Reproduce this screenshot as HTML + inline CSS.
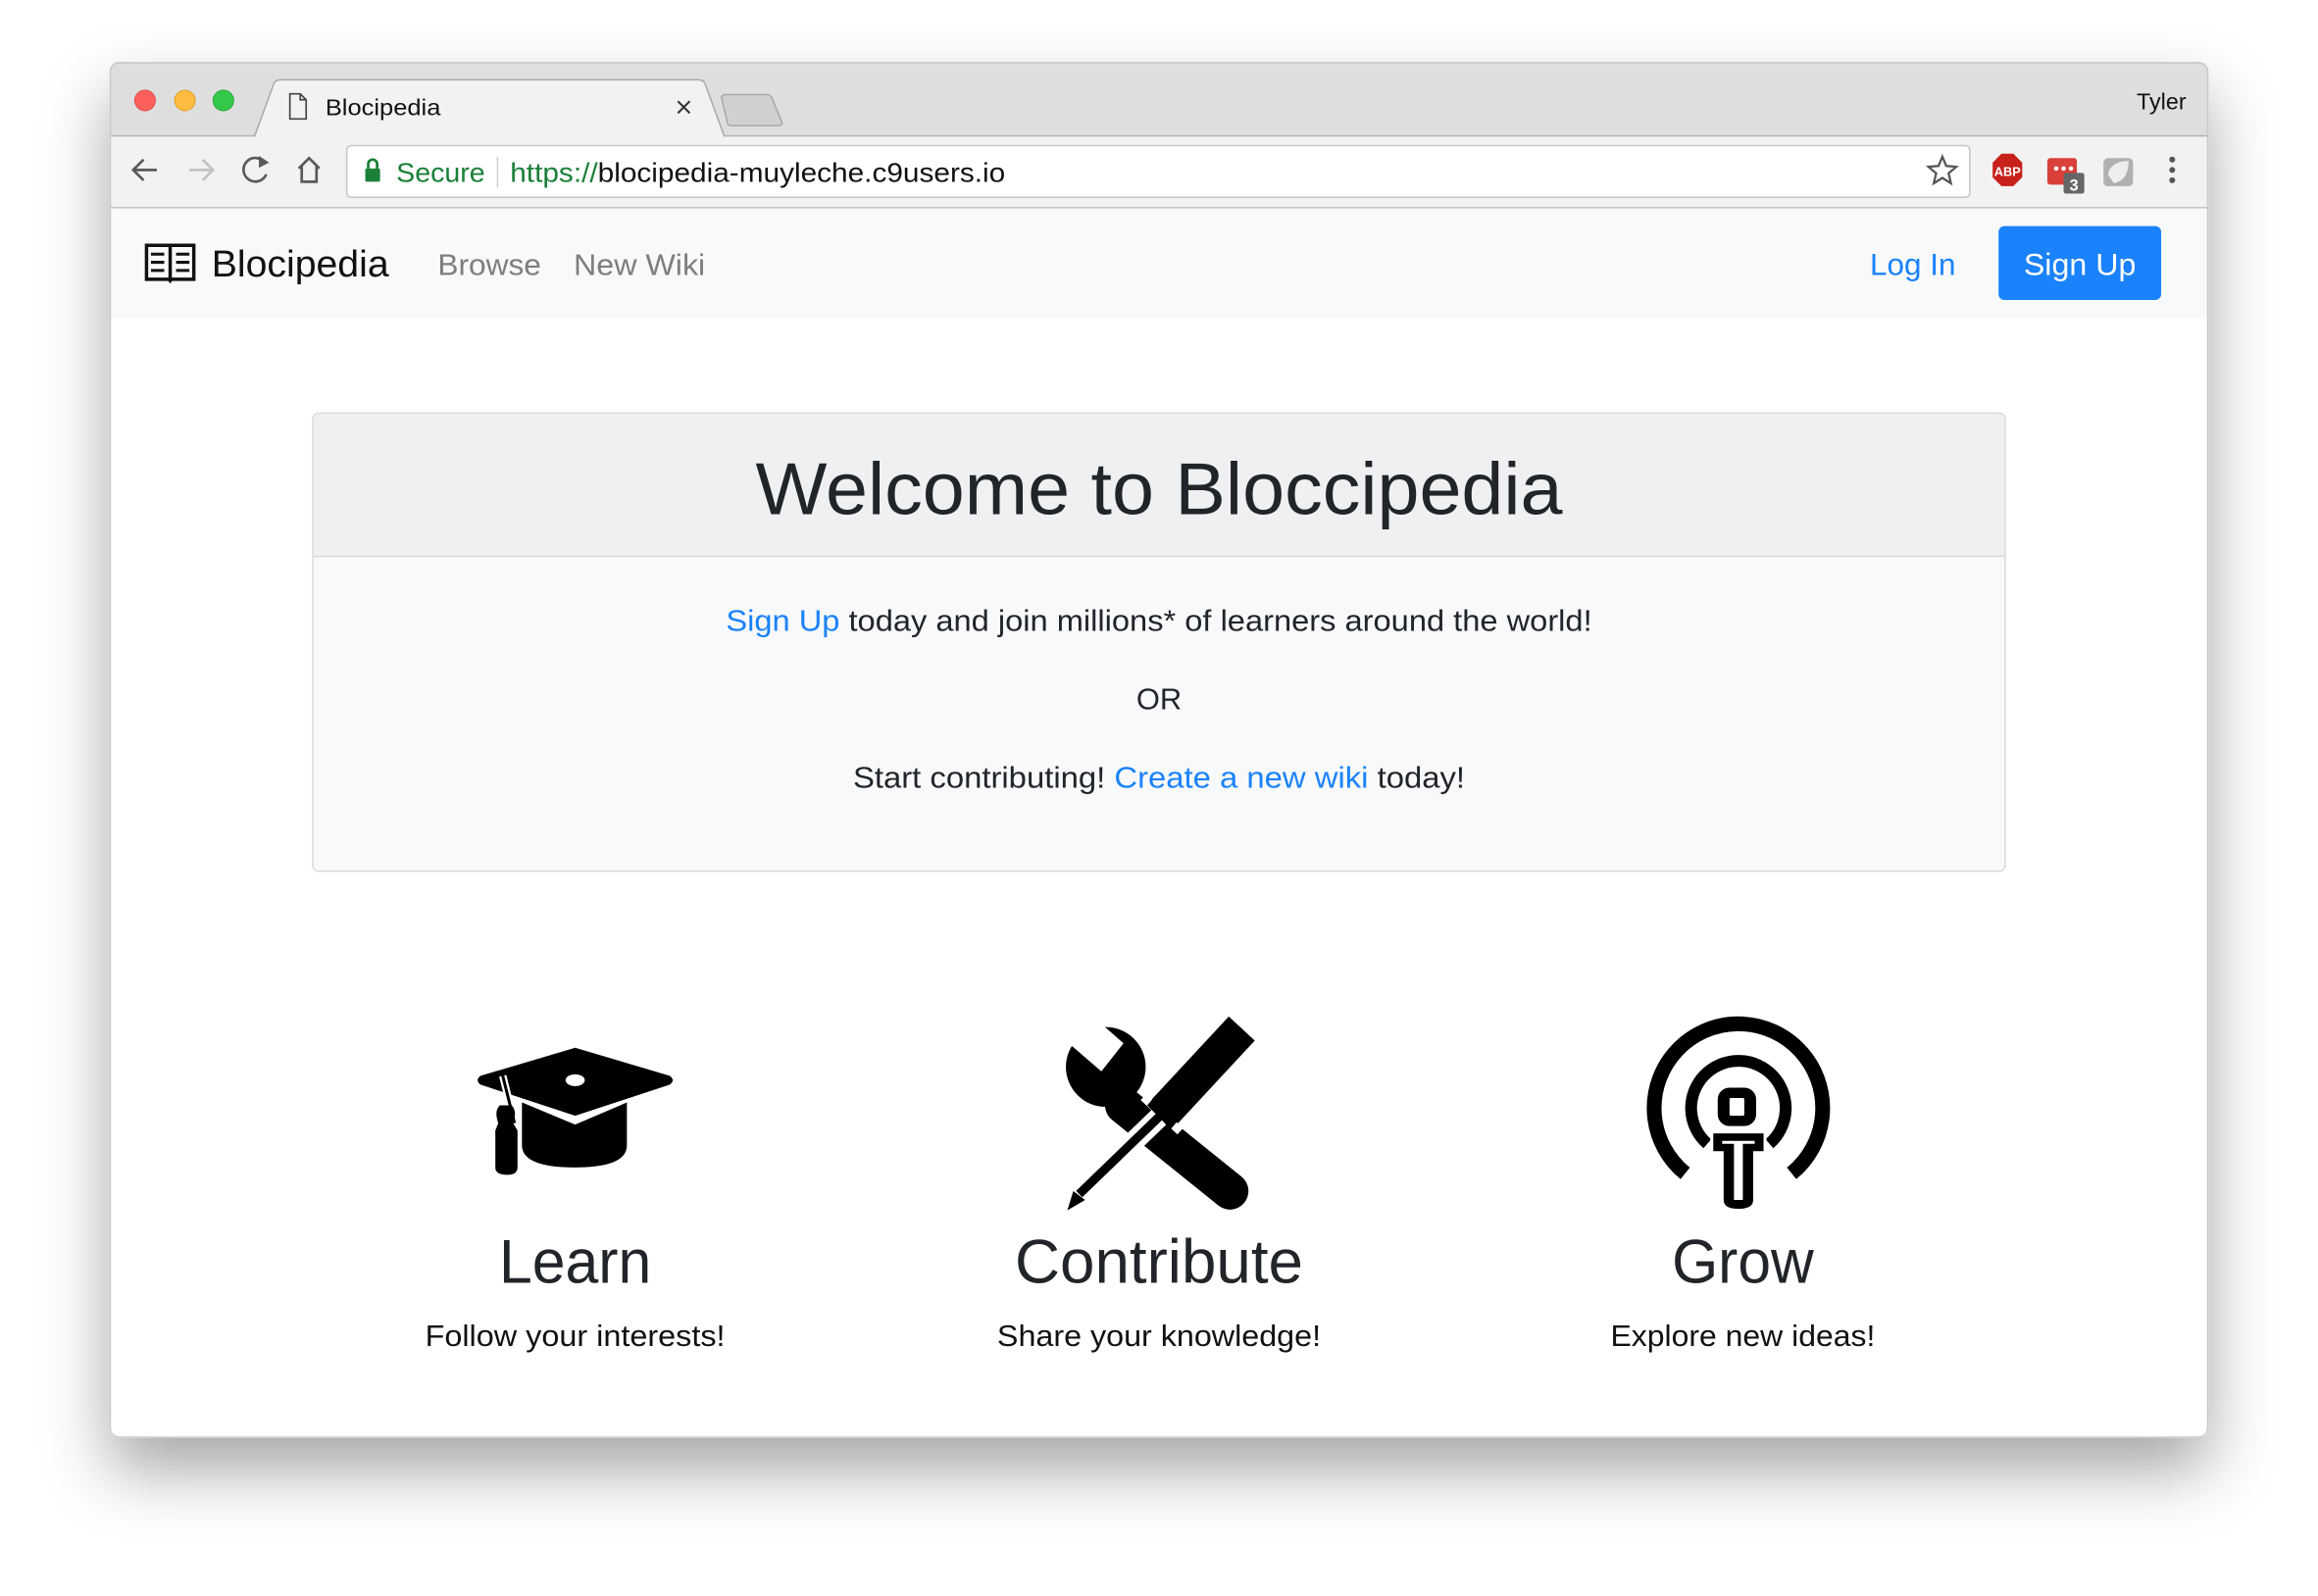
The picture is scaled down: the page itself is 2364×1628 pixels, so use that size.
<!DOCTYPE html>
<html><head><meta charset="utf-8"><style>
html,body{margin:0;padding:0;background:#fff;width:2364px;height:1628px;overflow:hidden}
svg{display:block}
text{font-family:"Liberation Sans",Arial,sans-serif}
</style></head><body>
<svg width="2364" height="1628" viewBox="0 0 1568 1080" xmlns="http://www.w3.org/2000/svg">
<defs>
<filter id="sh" x="-20%" y="-20%" width="140%" height="150%">
<feDropShadow dx="0" dy="22" stdDeviation="22" flood-color="#000" flood-opacity="0.35"/>
</filter>
<clipPath id="win"><rect x="74" y="42" width="1420" height="931" rx="6"/></clipPath>
</defs>
<rect x="0" y="0" width="1568" height="1080" fill="#fff"/>
<rect x="74" y="42" width="1420" height="931" rx="6" fill="#fff" filter="url(#sh)"/>
<g clip-path="url(#win)">
<rect x="74" y="42" width="1420" height="50" fill="#dedede"/>
<rect x="74" y="92" width="1420" height="48" fill="#f2f2f2"/>
<line x1="74" y1="92" x2="1494" y2="92" stroke="#b4b4b4"/>
<line x1="74" y1="140.5" x2="1494" y2="140.5" stroke="#c4c4c4"/>
<rect x="74" y="141" width="1420" height="74" fill="#f8f9fa"/>
<rect x="74" y="215" width="1420" height="758" fill="#fff"/>
</g>
<rect x="74.5" y="42.5" width="1419" height="930" rx="6" fill="none" stroke="#c8c8c8"/>
<path d="M172,92.5 L185,57 Q186,54 190,54 L472,54 Q476,54 477,57 L490,92.5" fill="#f2f2f2" stroke="#a9a9a9"/>
<line x1="173" y1="92.5" x2="489" y2="92.5" stroke="#f2f2f2" stroke-width="1.5"/>
<path d="M488,66 Q488,64 491,64 L518,64 Q521,64 522,66 L529,83 Q529,85 526,85 L495,85 Q492,85 492,83 Z" fill="#d0d0d0" stroke="#a8a8a8"/>
<circle cx="98" cy="68" r="7" fill="#fc605c" stroke="#de4a45" stroke-width="0.6"/>
<circle cx="125" cy="68" r="7" fill="#fdbc40" stroke="#dd9f2c" stroke-width="0.6"/>
<circle cx="151" cy="68" r="7" fill="#34c84a" stroke="#27a83a" stroke-width="0.6"/>
<path d="M196,63.5 L203,63.5 L207,67.5 L207,80.5 L196,80.5 Z M203,63.5 L203,67.5 L207,67.5" fill="none" stroke="#444" stroke-width="1.1"/>
<text x="220" y="78" font-size="15.5" fill="#111" textLength="78" lengthAdjust="spacingAndGlyphs">Blocipedia</text>
<path d="M458.5,68.5 L466.5,76.5 M466.5,68.5 L458.5,76.5" stroke="#333" stroke-width="1.4"/>
<text x="1479" y="74" font-size="15.5" fill="#111" text-anchor="end">Tyler</text>
<path d="M106,115 L91,115 M97,108 L90,115 L97,122" fill="none" stroke="#5a5a5a" stroke-width="1.8"/>
<path d="M128,115 L143,115 M137,108 L144,115 L137,122" fill="none" stroke="#c2c2c2" stroke-width="1.8"/>
<path d="M179,110 A8,8 0 1 0 180,118" fill="none" stroke="#5a5a5a" stroke-width="1.8"/>
<path d="M175,106 L181,110 L175,113" fill="#5a5a5a" stroke="#5a5a5a" stroke-width="1"/>
<path d="M202,114 L209,107 L216,114 M204,112 L204,123 L214,123 L214,112" fill="none" stroke="#5a5a5a" stroke-width="1.8"/>
<rect x="234.5" y="98.5" width="1098" height="35" rx="3" fill="#fff" stroke="#c6c6c6"/>
<rect x="247" y="114" width="10" height="9" rx="1" fill="#1a7f37"/>
<path d="M249,114 L249,111 A3,3 0 0 1 255,111 L255,114" fill="none" stroke="#1a7f37" stroke-width="1.8"/>
<text x="268" y="123" font-size="18.5" fill="#1a7f37" textLength="60" lengthAdjust="spacingAndGlyphs">Secure</text>
<line x1="336.5" y1="106" x2="336.5" y2="127" stroke="#d0d0d0"/>
<text x="345" y="123" font-size="18.5" fill="#111" textLength="335" lengthAdjust="spacingAndGlyphs"><tspan fill="#1a7f37">https://</tspan>blocipedia-muyleche.c9users.io</text>
<path d="M1314,106 L1316.6,112.3 L1323.4,112.9 L1318.2,117.3 L1319.8,124 L1314,120.4 L1308.2,124 L1309.8,117.3 L1304.6,112.9 L1311.4,112.3 Z" fill="none" stroke="#555" stroke-width="1.5"/>
<polygon points="1354,104 1362,104 1368,110 1368,120 1362,126 1354,126 1348,120 1348,110" fill="#c8201a"/>
<text x="1358" y="119" font-size="8.5" font-weight="bold" fill="#fff" text-anchor="middle">ABP</text>
<rect x="1385" y="107" width="20" height="18" rx="2" fill="#d9403a"/>
<circle cx="1391" cy="114" r="1.5" fill="#fff"/><circle cx="1396" cy="114" r="1.5" fill="#fff"/><circle cx="1401" cy="114" r="1.5" fill="#fff"/>
<rect x="1396" y="117" width="14" height="14" rx="1.5" fill="#666"/>
<text x="1403" y="129" font-size="11" font-weight="bold" fill="#fff" text-anchor="middle">3</text>
<rect x="1423" y="107" width="20" height="19" rx="3" fill="#b0b0b0"/>
<path d="M1426,118 Q1428,109 1440,109 Q1440,122 1430,124 Z" fill="#eee"/>
<circle cx="1469.5" cy="108" r="2" fill="#555"/><circle cx="1469.5" cy="115" r="2" fill="#555"/><circle cx="1469.5" cy="122" r="2" fill="#555"/>
<g fill="none" stroke="#111" stroke-width="2.3">
<path d="M99,166 L115,166 L115,189 L99,189 Z M115,166 L131,166 L131,189 L115,189"/>
<path d="M102,172 L111,172 M102,177.5 L111,177.5 M102,183 L111,183 M119,172 L128,172 M119,177.5 L128,177.5 M119,183 L128,183" stroke-width="2"/>
</g>
<path d="M113,189 L115,192 L117,189 Z" fill="#111"/>
<text x="143" y="187" font-size="25.5" fill="#111" textLength="120" lengthAdjust="spacingAndGlyphs">Blocipedia</text>
<text x="296" y="186" font-size="20.5" fill="#7d7e7f" textLength="70" lengthAdjust="spacingAndGlyphs">Browse</text>
<text x="388" y="186" font-size="20.5" fill="#7d7e7f" textLength="89" lengthAdjust="spacingAndGlyphs">New Wiki</text>
<text x="1265" y="186" font-size="21" fill="#1a82fb" textLength="58" lengthAdjust="spacingAndGlyphs">Log In</text>
<rect x="1352" y="153" width="110" height="50" rx="4" fill="#1a82fb"/>
<text x="1407" y="186" font-size="21" fill="#fff" text-anchor="middle" textLength="76" lengthAdjust="spacingAndGlyphs">Sign Up</text>
<rect x="211.5" y="279.5" width="1145" height="310" rx="4" fill="#f8f9fa" stroke="#d9dadb"/>
<path d="M212,376 L212,284 Q212,280 216,280 L1352,280 Q1356,280 1356,284 L1356,376 Z" fill="#eff0f2"/>
<line x1="212" y1="376.5" x2="1356" y2="376.5" stroke="#d6d7d8"/>
<text x="784" y="348" font-size="50" fill="#212529" text-anchor="middle" textLength="546" lengthAdjust="spacingAndGlyphs">Welcome to Bloccipedia</text>
<text x="784" y="427" font-size="20.5" fill="#212529" text-anchor="middle" textLength="586" lengthAdjust="spacingAndGlyphs"><tspan fill="#1a82fb">Sign Up</tspan> today and join millions* of learners around the world!</text>
<text x="784" y="480" font-size="20.5" fill="#212529" text-anchor="middle">OR</text>
<text x="784" y="533" font-size="20.5" fill="#212529" text-anchor="middle" textLength="414" lengthAdjust="spacingAndGlyphs">Start contributing! <tspan fill="#1a82fb">Create a new wiki</tspan> today!</text>
<path d="M389,709 L453,728 Q457,731 453,734 L389,755 L325,734 Q321,731 325,728 Z" fill="#000"/>
<ellipse cx="389" cy="731" rx="6.5" ry="4" fill="#fff"/>
<path d="M353,746 L389,761 L424,746 L424,775 Q424,790 389,790 Q353,790 353,775 Z" fill="#000"/>
<path d="M340,728 L348,760" stroke="#fff" stroke-width="5"/>
<path d="M340,728 L348,760" stroke="#000" stroke-width="2"/>
<path d="M337,760 Q334,752 338,748 L346,748 Q350,752 347,760 L350,765 L350,790 Q350,795 343,795 Q335,795 335,790 L335,765 Z" fill="#000"/>
<line x1="760" y1="748" x2="832" y2="806" stroke="#000" stroke-width="25" stroke-linecap="round"/>
<circle cx="748" cy="722" r="27" fill="#000"/>
<path d="M716,700 L745,725 L760,706 L735,684 Z" fill="#fff"/>
<line x1="840" y1="696" x2="784" y2="756" stroke="#fff" stroke-width="34"/>
<line x1="784" y1="756" x2="730" y2="808" stroke="#fff" stroke-width="14"/>
<line x1="840" y1="696" x2="788" y2="752" stroke="#000" stroke-width="24"/>
<line x1="790" y1="750" x2="730" y2="808" stroke="#000" stroke-width="6"/>
<polygon points="726,806 734,812 722,819" fill="#000"/>
<polygon points="776,748 792,764 798,757 782,741" fill="#000"/>
<path d="M1140,794 A57,57 0 1 1 1212,794" fill="none" stroke="#000" stroke-width="10"/>
<path d="M1155,774 A32,32 0 1 1 1197,774" fill="none" stroke="#000" stroke-width="8"/>
<rect x="1161" y="735" width="28" height="28" rx="9" fill="#000" stroke="#fff" stroke-width="2"/>
<rect x="1170" y="743" width="10" height="12" rx="1" fill="#fff"/>
<path d="M1158,766 L1194,766 L1194,780 L1187,780 L1187,812 Q1187,819 1176,819 Q1165,819 1165,812 L1165,780 L1158,780 Z" fill="#000" stroke="#fff" stroke-width="2"/>
<path d="M1165,772 L1187,772 L1187,774 L1179,774 L1179,812 L1173,812 L1173,774 L1165,774 Z" fill="#fff"/>
<text x="389" y="868" font-size="42" fill="#212529" text-anchor="middle" textLength="103" lengthAdjust="spacingAndGlyphs">Learn</text>
<text x="784" y="868" font-size="42" fill="#212529" text-anchor="middle" textLength="195" lengthAdjust="spacingAndGlyphs">Contribute</text>
<text x="1179" y="868" font-size="42" fill="#212529" text-anchor="middle" textLength="96" lengthAdjust="spacingAndGlyphs">Grow</text>
<text x="389" y="911" font-size="20.5" fill="#111" text-anchor="middle" textLength="203" lengthAdjust="spacingAndGlyphs">Follow your interests!</text>
<text x="784" y="911" font-size="20.5" fill="#111" text-anchor="middle" textLength="219" lengthAdjust="spacingAndGlyphs">Share your knowledge!</text>
<text x="1179" y="911" font-size="20.5" fill="#111" text-anchor="middle" textLength="179" lengthAdjust="spacingAndGlyphs">Explore new ideas!</text>
</svg>
</body></html>
